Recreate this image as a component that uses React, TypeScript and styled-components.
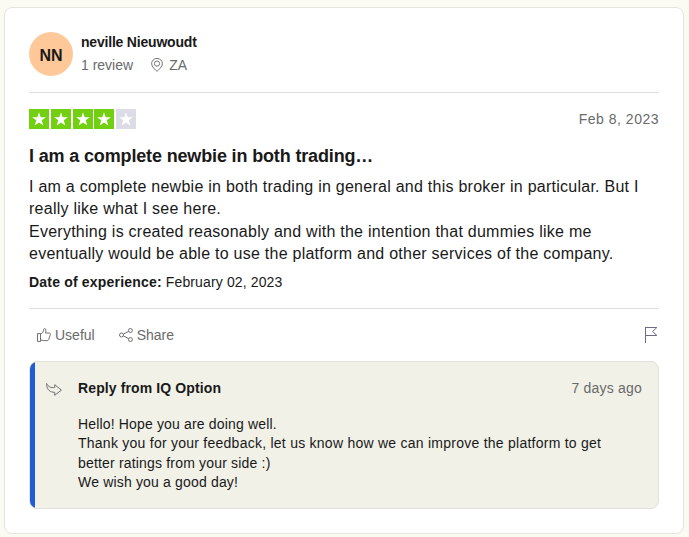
import React from "react";
import styled, { createGlobalStyle } from "styled-components";

const GlobalStyle = createGlobalStyle`
  * { box-sizing: border-box; }
  body {
    margin: 0;
    background: #fcfbf3;
    color: #191919;
    font: 14px/20px "Liberation Sans", Arial, sans-serif;
  }
`;

const Page = styled.main`
  height: 537px;
  padding: 7px 5px 3px 4px;
  overflow: hidden;
`;

const Card = styled.article`
  display: flex;
  flex-direction: column;
  height: 527px;
  padding: 24px;
  background: #fff;
  border: 1px solid #e5e5dd;
  border-radius: 8px;
`;

const Author = styled.header`
  display: flex;
  height: 61px;
  border-bottom: 1px solid #e0e0e0;
`;

const Avatar = styled.div`
  width: 44px;
  height: 44px;
  border-radius: 50%;
  background: #ffc899;
  font-size: 16px;
  font-weight: 700;
  line-height: 48px;
  text-align: center;
`;

const AuthorInfo = styled.div`
  margin-left: 8px;
`;

const Name = styled.div<{ $spacing: number }>`
  font-weight: 700;
  letter-spacing: ${(p) => p.$spacing}px;
`;

const Meta = styled.div`
  display: flex;
  align-items: center;
  height: 20px;
  margin-top: 3px;
  color: #696a6a;

  svg { margin: 0 6px 0 18px; }
`;

const RatingRow = styled.div`
  display: flex;
  justify-content: space-between;
  align-items: center;
  height: 20px;
  margin-top: 16px;
`;

const Stars = styled.div`
  display: flex;
  gap: 1.75px;
`;

const Star = styled.span<{ $filled: boolean }>`
  display: flex;
  width: 20px;
  height: 20px;
  background: ${(p) => (p.$filled ? "#73cf11" : "#dcdce6")};
`;

const DateText = styled.time<{ $spacing: number }>`
  color: #696a6a;
  letter-spacing: ${(p) => p.$spacing}px;
`;

const Title = styled.h2`
  margin: 14px 0 0;
  font-size: 18px;
  line-height: 26px;
  letter-spacing: -0.15px;
`;

const Body = styled.p`
  margin: 7px 0 0;
  height: 89px;
  font-size: 16px;
  line-height: 22.4px;
  letter-spacing: 0.253px;
  white-space: pre;
`;

const Experience = styled.p`
  margin: 7px 0 0;
  height: 20px;
  letter-spacing: 0.13px;

  b { letter-spacing: 0.19px; }
`;

const Actions = styled.div`
  display: flex;
  align-items: center;
  height: 53px;
  margin-top: 16px;
  padding: 0 1px 0 8px;
  border-top: 1px solid #e0e0e0;
`;

const Action = styled.button`
  display: flex;
  align-items: center;
  gap: 4px;
  margin-right: 24px;
  padding: 0;
  border: 0;
  background: none;
  color: #696a6a;
  font: inherit;
`;

const FlagButton = styled(Action)`
  margin: 0 0 0 auto;
`;

const Reply = styled.section`
  display: flex;
  height: 148px;
  border: 1px solid #e2e2d8;
  border-radius: 8px;
  background: #f1f1e8;
  overflow: hidden;
`;

const Accent = styled.div`
  width: 5px;
  margin: -1px 0;
  background: #205cd4;
`;

const ReplyIcon = styled.div`
  width: 43px;
  padding: 20px 0 0 11px;
`;

const ReplyContent = styled.div`
  flex: 1;
  padding: 16px 16px 0 0;
`;

const ReplyHeader = styled.div`
  display: flex;
  justify-content: space-between;
`;

const ReplyText = styled.p`
  margin: 17px 0 0;
  line-height: 19.4px;
`;

const Line = styled.span<{ $spacing: number }>`
  display: block;
  white-space: nowrap;
  letter-spacing: ${(p) => p.$spacing}px;
`;

const PinIcon = () => (
  <svg width="12" height="14" viewBox="0 0 12 14" fill="none" stroke="#707070" strokeWidth="0.95">
    <path d="M6 13.4C4.5 11.8.6 8.8.6 5.8a5.4 5.4 0 0 1 10.8 0c0 3-3.9 6-5.4 7.6Z" />
    <circle cx="6" cy="5.6" r="2.6" />
  </svg>
);

const StarIcon = () => (
  <svg width="20" height="20" viewBox="0 0 20 20" fill="#fff">
    <path d="M10 3.3l1.7 4.9h5.2l-4.2 3.1 1.6 5.1L10 13.4l-4.3 3 1.6-5.1-4.2-3.1h5.2Z" />
  </svg>
);

const ThumbIcon = () => (
  <svg width="14" height="14" viewBox="0 0 14 14" fill="none" stroke="#707070">
    <path d="M.5 5.5h3v8h-3ZM3.5 6.2C5.8 5.2 6.6 3.5 6.7 1.3 6.8.2 8.8.2 8.9 2c.1 1.2-.2 2.2-.5 3h4.2c.9 0 1 1 .7 1.7l-1.6 4.8c-.3.8-.8 1.1-1.5 1.1H6.4l-2.9-.8" />
  </svg>
);

const ShareIcon = () => (
  <svg width="14" height="14" viewBox="0 0 14 14" fill="none" stroke="#707070">
    <circle cx="2.5" cy="7" r="2" />
    <circle cx="11.4" cy="2.5" r="2" />
    <circle cx="11.4" cy="11.5" r="2" />
    <path d="M4.3 6.1l5.3-2.7M4.3 7.9l5.3 2.7" />
  </svg>
);

const FlagIcon = () => (
  <svg width="14" height="16" viewBox="0 0 14 16" fill="none" stroke="#6c6c85">
    <path d="M1.5 0v16M1.5.5h11.4l-4.4 4 4.4 4H1.5" />
  </svg>
);

const ArrowIcon = () => (
  <svg width="16" height="15" viewBox="0 0 16 15" fill="none" stroke="#707070" strokeLinejoin="round">
    <path d="M.6 1.5c1.8 3.4 4.3 4.4 8.1 4.1V2.7l6.7 5.4-6.7 5.2v-3C4.2 10.4.6 7.8.6 1.5Z" />
  </svg>
);

export default function App() {
  return (
    <>
      <GlobalStyle />
      <Page>
        <Card>
          <Author>
            <Avatar>NN</Avatar>
            <AuthorInfo>
              <Name $spacing={-0.2}>neville Nieuwoudt</Name>
              <Meta>1 review<PinIcon />ZA</Meta>
            </AuthorInfo>
          </Author>
          <RatingRow>
            <Stars>
              {[1, 2, 3, 4, 5].map((n) => (
                <Star key={n} $filled={n < 5}><StarIcon /></Star>
              ))}
            </Stars>
            <DateText $spacing={0.5}>Feb 8, 2023</DateText>
          </RatingRow>
          <Title>I am a complete newbie in both trading…</Title>
          <Body>{`I am a complete newbie in both trading in general and this broker in particular. But I
really like what I see here.
Everything is created reasonably and with the intention that dummies like me
eventually would be able to use the platform and other services of the company.`}</Body>
          <Experience><b>Date of experience:</b> February 02, 2023</Experience>
          <Actions>
            <Action><ThumbIcon />Useful</Action>
            <Action><ShareIcon />Share</Action>
            <FlagButton aria-label="Flag"><FlagIcon /></FlagButton>
          </Actions>
          <Reply>
            <Accent />
            <ReplyIcon><ArrowIcon /></ReplyIcon>
            <ReplyContent>
              <ReplyHeader>
                <Name $spacing={0.12}>Reply from IQ Option</Name>
                <DateText $spacing={0.2}>7 days ago</DateText>
              </ReplyHeader>
              <ReplyText>
                <Line $spacing={0.16}>Hello! Hope you are doing well.</Line>
                <Line $spacing={0.25}>Thank you for your feedback, let us know how we can improve the platform to get</Line>
                <Line $spacing={0.18}>better ratings from your side :)</Line>
                <Line $spacing={0.17}>We wish you a good day!</Line>
              </ReplyText>
            </ReplyContent>
          </Reply>
        </Card>
      </Page>
    </>
  );
}
